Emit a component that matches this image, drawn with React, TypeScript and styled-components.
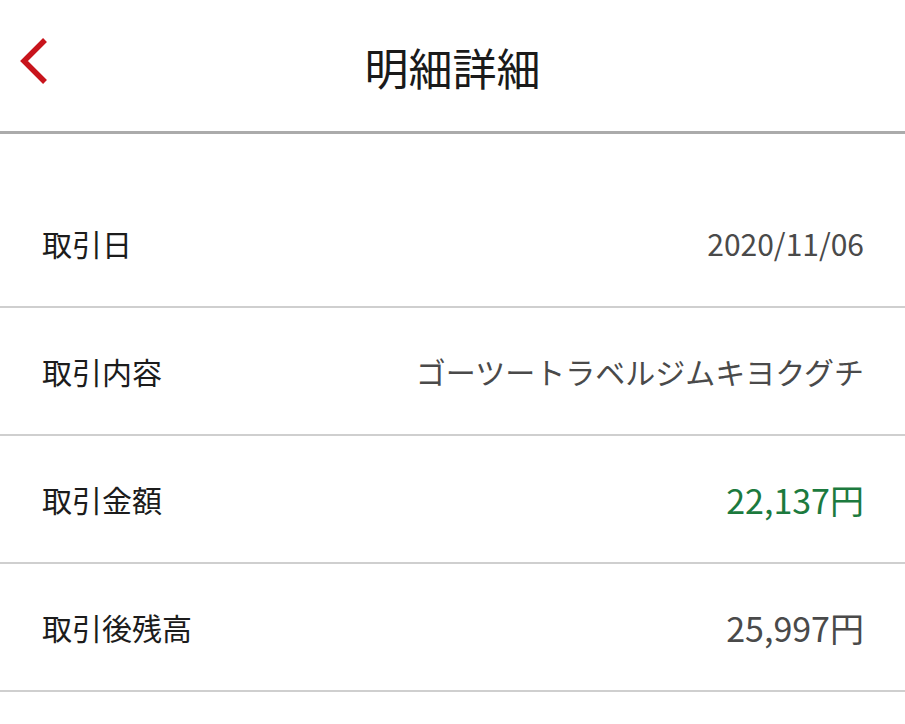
import styled, { createGlobalStyle } from "styled-components";

type Row = {
    label: string;
    value: string;
    tone?: "plain" | "income";
    size?: "normal" | "large";
};

const rows: Row[] = [
    { label: "取引日", value: "2020/11/06" },
    { label: "取引内容", value: "ゴーツートラベルジムキヨクグチ" },
    { label: "取引金額", value: "22,137円", tone: "income", size: "large" },
    { label: "取引後残高", value: "25,997円", size: "large" },
];

const App = () => {
    return (
        <>
            <GlobalStyle />
            <Page>
                <Header>
                    <BackButton aria-label="戻る">
                        <svg width="30" height="48" viewBox="0 0 30 48" fill="none">
                            <path
                                d="M26 3 L5 24 L26 45"
                                stroke="#c8141c"
                                strokeWidth="5.5"
                                strokeLinecap="butt"
                                strokeLinejoin="miter"
                            />
                        </svg>
                    </BackButton>
                    <Title>明細詳細</Title>
                </Header>

                <DetailList>
                    {rows.map((row) => (
                        <DetailRow key={row.label}>
                            <Label>{row.label}</Label>
                            <Value $tone={row.tone ?? "plain"} $size={row.size ?? "normal"}>
                                {row.value}
                            </Value>
                        </DetailRow>
                    ))}
                </DetailList>
            </Page>
        </>
    );
};

export default App;

/* ================= styled ================= */

const GlobalStyle = createGlobalStyle`
    html, body {
        margin: 0;
        padding: 0;
        background: #ffffff;
    }
    body {
        font-family: "Noto Sans CJK JP", "Noto Sans", sans-serif;
        color: #222222;
    }
`;

const Page = styled.div`
    width: 905px;
    min-height: 724px;
    background: #ffffff;
`;

const Header = styled.header`
    position: relative;
    height: 131px;
    display: flex;
    align-items: center;
    justify-content: center;
    border-bottom: 3px solid #ababab;
`;

const BackButton = styled.button`
    position: absolute;
    left: 19px;
    top: 37px;
    padding: 0;
    border: none;
    background: none;
    display: flex;
    cursor: pointer;
`;

const Title = styled.h1`
    margin: 0;
    margin-top: 2px;
    font-size: 44px;
    font-weight: 400;
    color: #1a1a1a;
    letter-spacing: 0;
`;

const DetailList = styled.div`
    display: flex;
    flex-direction: column;
    padding-top: 46px;
`;

const DetailRow = styled.div`
    height: 126px;
    display: flex;
    align-items: center;
    justify-content: space-between;
    padding: 0 41px 0 42px;
    border-bottom: 2px solid #cfcfcf;
`;

const Label = styled.span`
    font-size: 30px;
    color: #1c1c1c;
    white-space: nowrap;
`;

const Value = styled.span<{ $tone: "plain" | "income"; $size: "normal" | "large" }>`
    font-size: ${({ $size }) => ($size === "large" ? "34px" : "30px")};
    color: ${({ $tone }) => ($tone === "income" ? "#1c7a3e" : "#4a4a4a")};
    white-space: nowrap;
`;
